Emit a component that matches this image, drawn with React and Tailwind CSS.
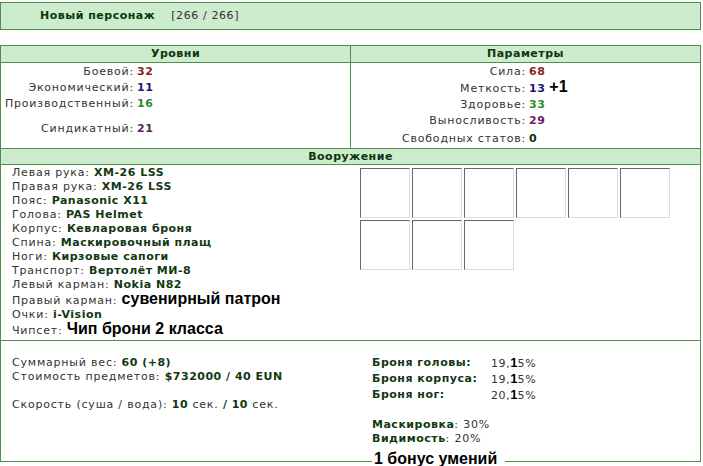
const levels = [
  { label: 'Боевой:', value: '32', color: 'text-[#8a1d1d]' },
  { label: 'Экономический:', value: '11', color: 'text-[#1d1d6e]' },
  { label: 'Производственный:', value: '16', color: 'text-[#2d8a2d]' },
];

const params = [
  { label: 'Сила:', value: '68', color: 'text-[#8a1d1d]' },
  { label: 'Меткость:', value: '13', color: 'text-[#1d1d6e]', extra: '+1' },
  { label: 'Здоровье:', value: '33', color: 'text-[#2d8a2d]' },
  { label: 'Выносливость:', value: '29', color: 'text-[#6a216a]' },
];

const gear = [
  ['Левая рука:', 'XM-26 LSS'],
  ['Правая рука:', 'XM-26 LSS'],
  ['Пояс:', 'Panasonic X11'],
  ['Голова:', 'PAS Helmet'],
  ['Корпус:', 'Кевларовая броня'],
  ['Спина:', 'Маскировочный плащ'],
  ['Ноги:', 'Кирзовые сапоги'],
  ['Транспорт:', 'Вертолёт МИ-8'],
  ['Левый карман:', 'Nokia N82'],
];

const armor = [
  ['Броня головы:', '19,', '5%'],
  ['Броня корпуса:', '19,', '5%'],
  ['Броня ног:', '20,', '5%'],
];

const Slot = () => (
  <div className="w-[50px] h-[50px] border border-t-[#666] border-l-[#666] border-r-[#ddd] border-b-[#ddd] bg-white" />
);

const Big = ({ children }) => (
  <span className="font-['Liberation_Sans',Arial,sans-serif] font-bold text-[16px] tracking-normal text-black leading-[14px]">
    {children}
  </span>
);

const Val = ({ children, className = 'text-[#123812]' }) => (
  <span className={`font-bold tracking-[0.5px] ${className}`}>{children}</span>
);

export default function App() {
  return (
    <div className="w-[701px] h-[466px] overflow-hidden bg-white font-['DejaVu_Sans',Verdana,sans-serif] text-[11px] tracking-[0.8px] text-[#333]">
      {/* character header */}
      <div className="mt-[2px] h-[28px] border border-[#4e8f4e] bg-[#cdebcd] flex items-center pl-[39px] gap-[16px]">
        <Val className="text-[#0b360b]">Новый персонаж</Val>
        <span className="text-[#333] tracking-[0.6px]">[266 / 266]</span>
      </div>

      <div className="mt-[15px] border border-[#4e8f4e]">
        {/* levels / params headers */}
        <div className="grid grid-cols-[350px_1fr] h-[17px] bg-[#cdebcd] border-b border-[#4e8f4e] font-bold tracking-[0.5px] text-[#0b360b] leading-[16px]">
          <div className="text-center border-r border-[#4e8f4e]">Уровни</div>
          <div className="text-center">Параметры</div>
        </div>

        <div className="grid grid-cols-[350px_1fr] h-[85px] leading-[16px]">
          <div className="border-r border-[#4e8f4e] pt-[1px] pl-[2px]">
            {levels.map((r) => (
              <div key={r.label} className="flex">
                <span className="w-[131px] text-right">{r.label}</span>
                <Val className={`ml-[3px] ${r.color}`}>{r.value}</Val>
              </div>
            ))}
            <div className="flex mt-[9px]">
              <span className="w-[131px] text-right">Синдикатный:</span>
              <Val className="ml-[3px] text-[#5c1f5c]">21</Val>
            </div>
          </div>
          <div className="pt-[1px]">
            {params.map((r) => (
              <div key={r.label} className="flex items-baseline">
                <span className="w-[175px] text-right">{r.label}</span>
                <Val className={`ml-[3px] ${r.color}`}>{r.value}</Val>
                {r.extra && <span className="ml-[4px]"><Big>{r.extra}</Big></span>}
              </div>
            ))}
            <div className="flex mt-[2px]">
              <span className="w-[175px] text-right">Свободных статов:</span>
              <Val className="ml-[3px] text-[#0b360b]">0</Val>
            </div>
          </div>
        </div>

        {/* equipment */}
        <div className="h-[17px] bg-[#cdebcd] border-y border-[#4e8f4e] font-bold tracking-[0.5px] text-[#0b360b] text-center leading-[15px]">
          Вооружение
        </div>

        <div className="flex h-[176px] border-b border-[#4e8f4e]">
          <div className="w-[350px] pl-[11px] pt-[1px] leading-[14px]">
            {gear.map(([k, v]) => (
              <div key={k}>
                {k} <Val>{v}</Val>
              </div>
            ))}
            <div>
              Правый карман: <Big>сувенирный патрон</Big>
            </div>
            <div>
              Очки: <Val>i-Vision</Val>
            </div>
            <div>
              Чипсет: <Big>Чип брони 2 класса</Big>
            </div>
          </div>
          <div className="pl-[9px] pt-[3px] flex flex-col gap-[2px]">
            <div className="flex gap-[2px]">
              <Slot /><Slot /><Slot /><Slot /><Slot /><Slot />
            </div>
            <div className="flex gap-[2px]">
              <Slot /><Slot /><Slot />
            </div>
          </div>
        </div>

        {/* totals */}
        <div className="flex h-[120px]">
          <div className="w-[360px] pl-[11px] pt-[15px] leading-[14px]">
            <div>
              Суммарный вес: <Val>60 (+8)</Val>
            </div>
            <div>
              Стоимость предметов: <Val>$732000 / 40 EUN</Val>
            </div>
            <div className="mt-[14px]">
              Скорость (суша / вода): <Val>10</Val> сек. <Val>/</Val> <Val>10</Val> сек.
            </div>
          </div>
          <div className="pl-[11px] pt-[14px] leading-[15px]">
            {armor.map(([k, a, b]) => (
              <div key={k} className="flex">
                <Val className="w-[119px] text-[#123812]">{k}</Val>
                <span className="tracking-[0.6px]">
                  {a}
                  <span className="font-['Liberation_Sans',Arial,sans-serif] font-bold text-[13px] tracking-normal text-black">1</span>
                  {b}
                </span>
              </div>
            ))}
            <div className="mt-[15px] leading-[14px]">
              <Val>Маскировка</Val>: 30%
            </div>
            <div className="leading-[14px]">
              <Val>Видимость</Val>: 20%
            </div>
            <div className="relative mt-[4px] inline-block bg-white pl-[2px] pr-[8px] leading-[18px]">
              <span className="font-['Liberation_Sans',Arial,sans-serif] font-bold text-[16px] tracking-normal text-black">1 бонус умений</span>
            </div>
          </div>
        </div>
      </div>
    </div>
  );
}
